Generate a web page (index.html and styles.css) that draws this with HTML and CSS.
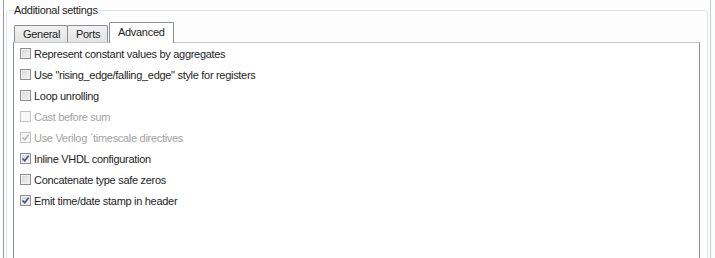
FILE: index.html
```html
<!DOCTYPE html>
<html lang="en">
<head>
  <meta charset="UTF-8" />
  <title>Additional settings</title>
  <link rel="stylesheet" href="styles.css">
</head>
<body>
  <div class="frame">
    <fieldset class="group">
      <legend>Additional settings</legend>
      <div class="tabs">
        <div class="tab">General</div>
        <div class="tab">Ports</div>
        <div class="tab active">Advanced</div>
      </div>
      <div class="pane">
        <div class="opt"><span class="box"></span>Represent constant values by aggregates</div>
        <div class="opt"><span class="box"></span>Use "rising_edge/falling_edge" style for registers</div>
        <div class="opt"><span class="box"></span>Loop unrolling</div>
        <div class="opt disabled"><span class="box"></span>Cast before sum</div>
        <div class="opt disabled">
          <span class="box"><svg viewBox="0 0 9 9"><path d="M1.5 4.5 L3.7 6.8 L7.6 1.8"/></svg></span>Use Verilog `timescale directives
        </div>
        <div class="opt">
          <span class="box"><svg viewBox="0 0 9 9"><path d="M1.5 4.5 L3.7 6.8 L7.6 1.8"/></svg></span>Inline VHDL configuration
        </div>
        <div class="opt"><span class="box"></span>Concatenate type safe zeros</div>
        <div class="opt">
          <span class="box"><svg viewBox="0 0 9 9"><path d="M1.5 4.5 L3.7 6.8 L7.6 1.8"/></svg></span>Emit time/date stamp in header
        </div>
      </div>
    </fieldset>
  </div>
</body>
</html>
```

FILE: styles.css
```css
:root {
  --text: #1e1e1e;
  --muted: #a2a2a2;
  --tab-border: #898c95;
  --group-border: #dde6e8;
  --check: #3d4f8c;
}
html, body {
  margin: 0;
  height: 100%;
  overflow: hidden;
}
body {
  font-family: 'Liberation Sans', Arial, sans-serif;
  font-size: 11px;
  letter-spacing: -0.3px;
  color: var(--text);
  background: #fdfdfd;
}
.frame {
  margin-left: 3px;
  width: 708px;
  height: 100%;
  border-left: 1px solid #9a9a9a;
  border-right: 1px solid #c5ccd2;
  box-sizing: border-box;
  padding: 4px 2px 0 2px;
  overflow: hidden;
}
.group {
  margin: 0;
  padding: 5px 7px 0 6px;
  height: 300px;
  border: 1px solid var(--group-border);
  border-radius: 3px;
}
.group legend {
  padding: 0 1px;
  margin-left: 0;
}
.tabs {
  display: flex;
  align-items: flex-end;
  height: 21px;
  padding-left: 1px;
}
.tab {
  height: 16px;
  line-height: 16px;
  padding: 0 8px;
  border: 1px solid var(--tab-border);
  border-bottom: none;
  margin-right: -1px;
  background: linear-gradient(#f2f2f2, #e3e3e3);
  border-radius: 2px 2px 0 0;
}
.tab:nth-child(1) { width: 36px; }
.tab:nth-child(2) { width: 23px; margin-right: 1px; }
.tab.active {
  position: relative;
  height: 20px;
  line-height: 18px;
  width: 47px;
  background: #fff;
  margin-bottom: -1px;
  z-index: 1;
}
.pane {
  background: #fff;
  border: 1px solid var(--tab-border);
  border-top-color: #c6c6c6;
  height: 260px;
  padding: 0 6px;
  display: flex;
  flex-direction: column;
}
.opt {
  display: flex;
  align-items: center;
  height: 21px;
}
.box {
  width: 11px;
  height: 11px;
  box-sizing: border-box;
  margin-right: 3px;
  border: 1px solid #8f8f8f;
  background: linear-gradient(135deg, #d6d6d6, #f4f4f4);
  box-shadow: inset 0 0 0 1px #f0f0f0;
  display: flex;
  align-items: center;
  justify-content: center;
}
.box svg {
  width: 9px;
  height: 9px;
  fill: none;
  stroke: var(--check);
  stroke-width: 1.6;
}
.opt.disabled {
  color: var(--muted);
}
.opt.disabled .box {
  border-color: #c4c4c4;
  background: #f7f7f7;
  box-shadow: none;
}
.opt.disabled .box svg {
  stroke: #b8b8b8;
}
```
